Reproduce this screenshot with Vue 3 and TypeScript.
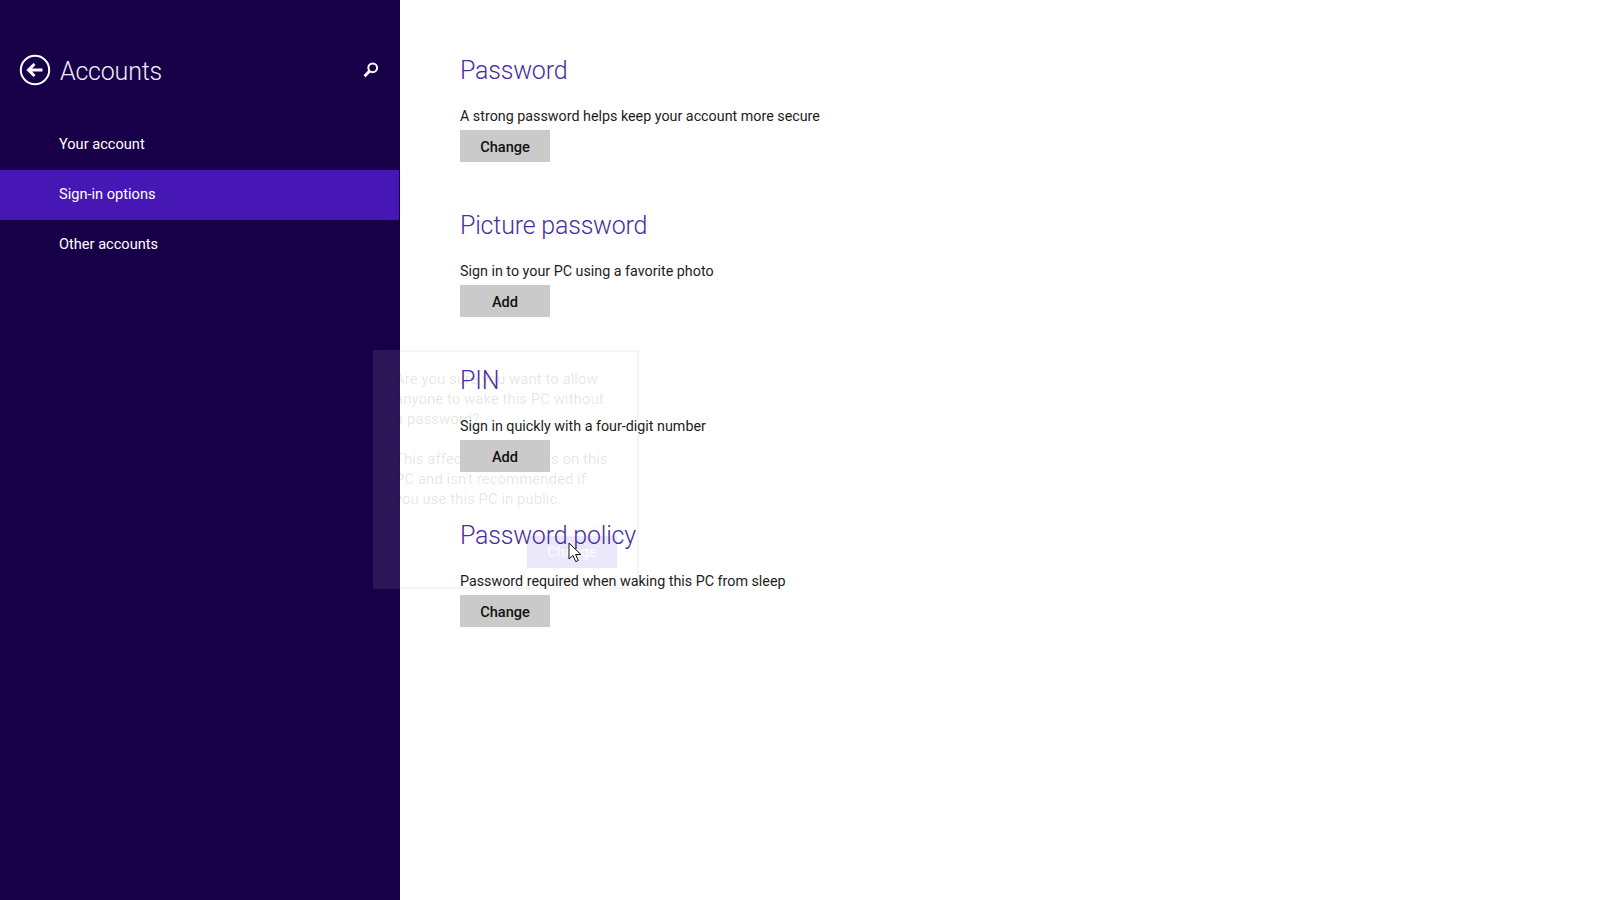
<script setup lang="ts">
const navItems = [
  { label: 'Your account', active: false },
  { label: 'Sign-in options', active: true },
  { label: 'Other accounts', active: false },
];

const sections = [
  { title: 'Password', text: 'A strong password helps keep your account more secure', action: 'Change' },
  { title: 'Picture password', text: 'Sign in to your PC using a favorite photo', action: 'Add' },
  { title: 'PIN', text: 'Sign in quickly with a four-digit number', action: 'Add' },
  { title: 'Password policy', text: 'Password required when waking this PC from sleep', action: 'Change' },
];
</script>

<template>
  <div class="page">
    <aside class="sidebar">
      <div class="side-header">
        <button class="back" aria-label="Back">
          <svg width="32" height="32" viewBox="0 0 32 32" fill="none" stroke="#fff">
            <circle cx="16" cy="16" r="14.2" stroke-width="2" />
            <path d="M23.5 16H10M15.5 10 9.5 16l6 6" stroke-width="3" />
          </svg>
        </button>
        <h1 class="side-title">Accounts</h1>
        <svg class="search" width="18" height="18" viewBox="0 0 18 18" fill="none" stroke="#fff">
          <circle cx="10.7" cy="6.8" r="4.4" stroke-width="2" />
          <path d="M7.6 10 2.6 15.2" stroke-width="3" />
        </svg>
      </div>
      <nav class="nav">
        <a v-for="item in navItems" :key="item.label" :class="['nav-item', { active: item.active }]">{{ item.label }}</a>
      </nav>
    </aside>

    <main class="content">
      <section v-for="s in sections" :key="s.title" class="section">
        <h2 class="section-title">{{ s.title }}</h2>
        <p class="section-text">{{ s.text }}</p>
        <button class="btn">{{ s.action }}</button>
      </section>
    </main>

    <div class="flyout">
      <p>Are you sure you want to allow<br />anyone to wake this PC without<br />a password?</p>
      <p>This affects all accounts on this<br />PC and isn't recommended if<br />you use this PC in public.</p>
      <div class="flyout-btn">Change</div>
    </div>

    <svg class="cursor" width="14" height="21" viewBox="0 0 14 21">
      <path d="M1 1v16l4-3.6 2.7 6.2 2.6-1.1-2.7-6h5.2z" fill="#fff" stroke="#111" stroke-width="1" />
    </svg>
  </div>
</template>

<style scoped>
.page {
  position: relative;
  display: flex;
  width: 1600px;
  height: 900px;
  overflow: hidden;
  background: #fff;
  font-family: Roboto, "Open Sans", sans-serif;
}

.sidebar {
  width: 400px;
  flex-shrink: 0;
  background: #180048;
  color: #fff;
}

.side-header {
  display: flex;
  align-items: center;
  height: 60px;
  margin-top: 40px;
  padding: 0 20px 0 19px;
  box-sizing: border-box;
}

.back {
  display: flex;
  width: 32px;
  height: 32px;
  padding: 0;
  margin-right: 9px;
  background: none;
  border: none;
}

.side-title {
  flex: 1;
  margin: 2px 0 0;
  font-size: 25px;
  font-weight: 300;
  letter-spacing: -0.2px;
  color: #f0ecfa;
}

.nav {
  display: flex;
  flex-direction: column;
  margin-top: 20px;
  padding-right: 1px;
}

.nav-item {
  height: 50px;
  padding-left: 59px;
  line-height: 49px;
  font-size: 14.6px;
  color: #fff;
}

.nav-item.active {
  background: #4617b4;
}

.content {
  position: relative;
  z-index: 2;
  display: flex;
  flex-direction: column;
  gap: 31px;
  padding: 50px 0 0 60px;
}

.section {
  height: 124px;
}

.section-title {
  height: 40px;
  margin: 0;
  padding-top: 1px;
  font-size: 25px;
  font-weight: 300;
  letter-spacing: -0.2px;
  line-height: 40px;
  color: #4a2ea2;
  box-sizing: border-box;
}

.section-text {
  height: 20px;
  margin: 16px 0 0;
  font-size: 14.3px;
  line-height: 20px;
  color: #1c1c1c;
}

.btn {
  display: block;
  width: 90px;
  height: 32px;
  margin-top: 4px;
  padding: 1px 0 0;
  background: #cacaca;
  border: none;
  font-family: inherit;
  font-size: 14.6px;
  font-weight: 500;
  color: #111;
}

.flyout {
  position: absolute;
  left: 373px;
  top: 350px;
  z-index: 1;
  width: 266px;
  height: 239px;
  padding: 17px 20px;
  box-sizing: border-box;
  background: rgba(255, 255, 255, 0.09);
  border: 2px solid rgba(0, 0, 0, 0.04);
  font-size: 15px;
  line-height: 20px;
  color: rgba(0, 0, 0, 0.11);
}

.flyout p {
  margin: 0 0 20px;
}

.flyout-btn {
  position: absolute;
  right: 20px;
  bottom: 19px;
  width: 90px;
  height: 32px;
  background: #ece8fb;
  color: #f9f8fe;
  font-size: 14.6px;
  font-weight: 500;
  line-height: 32px;
  text-align: center;
}

.cursor {
  position: absolute;
  left: 568px;
  top: 542px;
  z-index: 3;
}
</style>

<style>
html, body {
  margin: 0;
  background: #fff;
}
</style>
